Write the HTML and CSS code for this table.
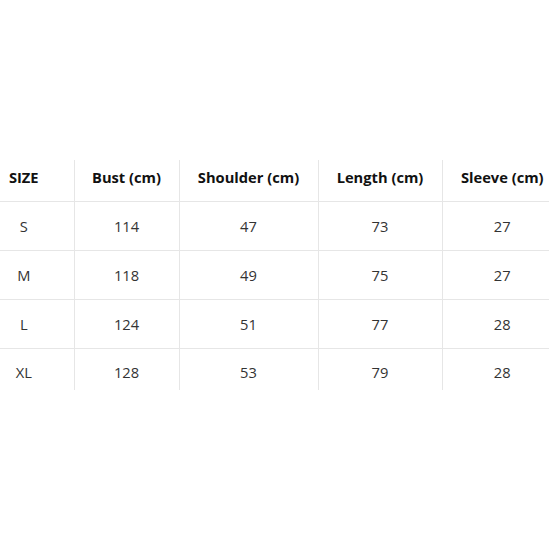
FILE: index.html
```html
<!DOCTYPE html>
<html>
<head>
<meta charset="utf-8">
<link rel="stylesheet" href="styles.css">
</head>
<body>
<div class="wrap">
<table class="size-table">
<colgroup>
<col class="c0"><col class="c1"><col class="c2"><col class="c3"><col class="c4">
</colgroup>
<thead>
<tr><th>SIZE</th><th>Bust (cm)</th><th>Shoulder (cm)</th><th>Length (cm)</th><th>Sleeve (cm)</th></tr>
</thead>
<tbody>
<tr><td>S</td><td>114</td><td>47</td><td>73</td><td>27</td></tr>
<tr><td>M</td><td>118</td><td>49</td><td>75</td><td>27</td></tr>
<tr><td>L</td><td>124</td><td>51</td><td>77</td><td>28</td></tr>
<tr class="last"><td>XL</td><td>128</td><td>53</td><td>79</td><td>28</td></tr>
</tbody>
</table>
</div>
</body>
</html>
```
FILE: styles.css
```css
html, body {
  margin: 0;
  padding: 0;
  background: #fff;
}
.wrap {
  width: 549px;
  height: 549px;
  overflow: hidden;
  padding-top: 160px;
  box-sizing: border-box;
}
.size-table {
  margin-left: -26px;
  border-collapse: collapse;
  table-layout: fixed;
  width: 588px;
  font-family: "Open Sans", "Noto Sans", sans-serif;
  font-size: 14.7px;
}
.c0 { width: 100px; }
.c1 { width: 105px; }
.c2 { width: 139px; }
.c3 { width: 124px; }
.c4 { width: 120px; }
.size-table th,
.size-table td {
  text-align: center;
  padding: 0;
  border-left: 1px solid #e6e6e6;
  border-bottom: 1px solid #e6e6e6;
}
.size-table th:first-child,
.size-table td:first-child {
  border-left: none;
}
.size-table th {
  height: 41px;
  font-weight: 700;
  color: #111;
  vertical-align: middle;
  padding-bottom: 6px;
  box-sizing: border-box;
}
.size-table td {
  height: 49px;
  color: #333;
  vertical-align: middle;
  box-sizing: border-box;
}
.size-table tr.last td {
  height: 42px;
  border-bottom: none;
  vertical-align: top;
  padding-top: 13px;
  box-sizing: border-box;
}
```
